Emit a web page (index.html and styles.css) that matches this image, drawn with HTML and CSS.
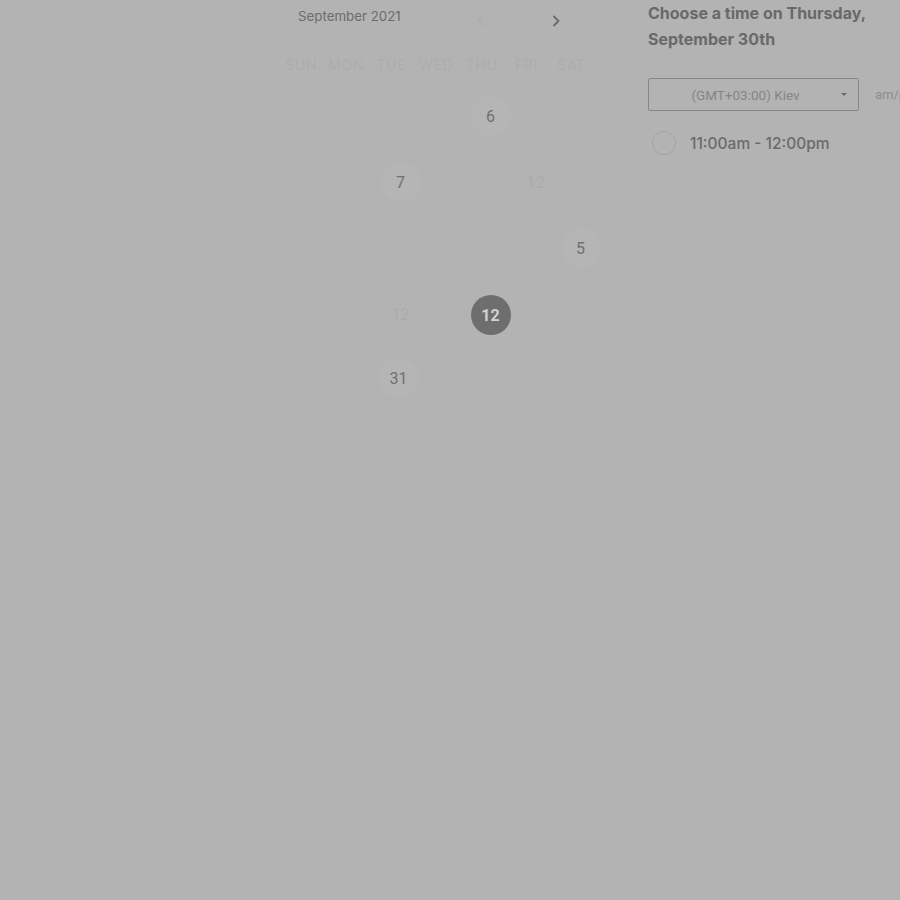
FILE: index.html
```html
<!DOCTYPE html>
<html>
<head>
<meta charset="utf-8">
<link rel="stylesheet" href="styles.css">
</head>
<body>
<div class="page">
  <section class="calendar">
    <div class="cal-head">
      <span class="month">September 2021</span>
      <span class="nav prev"><svg width="10" height="14" viewBox="0 0 10 14"><path d="M7.5 2 L2.5 7 L7.5 12" fill="none" stroke="currentColor" stroke-width="1.8"/></svg></span>
      <span class="nav next"><svg width="10" height="14" viewBox="0 0 10 14"><path d="M2.5 2 L7.5 7 L2.5 12" fill="none" stroke="currentColor" stroke-width="1.8"/></svg></span>
    </div>
    <div class="weekdays">
      <span>SUN</span><span>MON</span><span>TUE</span><span>WED</span><span>THU</span><span>FRI</span><span>SAT</span>
    </div>
    <div class="days">
      <span class="day"></span><span class="day"></span><span class="day"></span><span class="day"></span><span class="day avail">6</span><span class="day"></span><span class="day"></span>
      <span class="day"></span><span class="day"></span><span class="day avail">7</span><span class="day"></span><span class="day"></span><span class="day muted">12</span><span class="day"></span>
      <span class="day"></span><span class="day"></span><span class="day"></span><span class="day"></span><span class="day"></span><span class="day"></span><span class="day avail">5</span>
      <span class="day"></span><span class="day"></span><span class="day muted">12</span><span class="day"></span><span class="day selected">12</span><span class="day"></span><span class="day"></span>
      <span class="day"></span><span class="day"></span><span class="day avail last">31</span><span class="day"></span><span class="day"></span><span class="day"></span><span class="day"></span>
    </div>
  </section>
  <section class="times">
    <h2 class="title">Choose a time on Thursday, September 30th</h2>
    <div class="tz-row">
      <div class="select">(GMT+03:00) Kiev<span class="caret"></span></div>
      <span class="fmt">am/pm</span>
    </div>
    <label class="slot"><span class="radio"></span>11:00am - 12:00pm</label>
  </section>
</div>
</body>
</html>
```
FILE: styles.css
```css
html, body {
  margin: 0;
  padding: 0;
  background: #b3b3b3;
  width: 900px;
  height: 900px;
  overflow: hidden;
}
.page {
  display: flex;
  align-items: flex-start;
  font-family: Roboto, "Liberation Sans", sans-serif;
}
.calendar {
  margin-left: 279px;
  width: 330px;
  flex-shrink: 0;
}
.cal-head {
  display: flex;
  align-items: center;
  height: 34px;
  position: relative;
}
.month {
  font-family: Inter, "Liberation Sans", sans-serif;
  font-size: 13.3px;
  color: #6c6c6c;
  margin-left: 19px;
  line-height: 34px;
  position: relative;
  top: -1px;
}
.nav {
  display: flex;
  align-items: center;
  justify-content: center;
  width: 20px;
  height: 20px;
  position: relative;
  top: 4px;
}
.nav.prev {
  color: #adadad;
  margin-left: 70px;
}
.nav.next {
  color: #686868;
  margin-left: 55px;
}
.weekdays {
  display: grid;
  grid-template-columns: repeat(7, 45px);
  margin-top: 20px;
  height: 20px;
  align-items: center;
}
.weekdays span {
  text-align: center;
  font-size: 14px;
  font-weight: 300;
  letter-spacing: 0.8px;
  color: #ababab;
  font-family: Inter, "Liberation Sans", sans-serif;
}
.days {
  display: grid;
  grid-template-columns: repeat(7, 45px);
  grid-auto-rows: 66px;
  margin-left: 9px;
  margin-top: 9px;
}
.day {
  display: flex;
  align-items: center;
  justify-content: center;
  font-size: 16px;
}
.day.avail, .day.muted, .day.selected {
  width: 40px;
  height: 40px;
  border-radius: 50%;
  justify-self: center;
  align-self: center;
}
.day.avail {
  background: #b5b5b5;
  color: #707070;
}
.day.last {
  margin-top: -4px;
  margin-left: -4px;
}
.day.muted {
  color: #ababab;
}
.day.selected {
  background: #6e6e6e;
  color: #d2d2d2;
  font-weight: 700;
  margin-top: 2px;
  margin-left: 0;
}
.times {
  margin-left: 39px;
  flex-shrink: 0;
}
.title {
  font-family: Inter, "Liberation Sans", sans-serif;
  font-size: 16px;
  font-weight: 700;
  line-height: 26px;
  color: #696969;
  margin: 0;
  width: 240px;
}
.tz-row {
  display: flex;
  align-items: center;
  margin-top: 26px;
}
.select {
  box-sizing: border-box;
  width: 211px;
  height: 33px;
  flex-shrink: 0;
  border: 1px solid #878787;
  border-radius: 2px;
  display: flex;
  align-items: center;
  justify-content: center;
  font-size: 13.5px;
  color: #858585;
  position: relative;
  padding-right: 16px;
}
.caret {
  position: absolute;
  right: 11px;
  top: 14px;
  width: 0;
  height: 0;
  border-left: 3.5px solid transparent;
  border-right: 3.5px solid transparent;
  border-top: 3.5px solid #6a6a6a;
}
.fmt {
  margin-left: 16px;
  font-size: 13px;
  color: #8d8d8d;
  white-space: nowrap;
}
.slot {
  display: flex;
  align-items: center;
  margin-top: 20px;
  margin-left: 4px;
  font-family: Inter, "Liberation Sans", sans-serif;
  font-size: 15.5px;
  font-weight: 500;
  color: #6a6a6a;
}
.radio {
  box-sizing: border-box;
  width: 24px;
  height: 24px;
  border-radius: 50%;
  border: 1px solid #a3a3a3;
  margin-right: 14px;
}
```
